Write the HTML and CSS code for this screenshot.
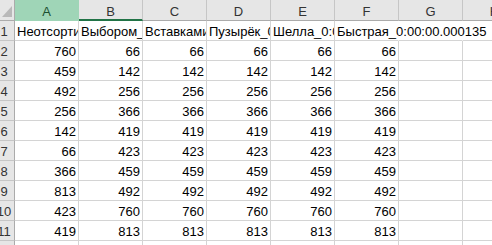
FILE: index.html
```html
<!DOCTYPE html>
<html lang="ru">
  <head>
    <meta charset="UTF-8" />
    <title>Сортировки</title>
    <link rel="stylesheet" href="styles.css">
  </head>
  <body>
    <div class="sheet">
      <!-- заголовки столбцов -->
      <div class="corner"><span class="tri"></span></div>
      <div class="col col-sel">A</div>
      <div class="col col-line">B</div>
      <div class="col">C</div>
      <div class="col">D</div>
      <div class="col">E</div>
      <div class="col">F</div>
      <div class="col">G</div>
      <div class="col">H</div>

      <!-- 1 -->
      <div class="rh">1</div>
      <div class="cell txt">Неотсортированный</div>
      <div class="cell txt">Выбором_0:00:00.000061</div>
      <div class="cell txt">Вставками_0:00:00.000042</div>
      <div class="cell txt">Пузырёк_0:00:00.000088</div>
      <div class="cell txt">Шелла_0:00:00.000047</div>
      <div class="cell txt spill">Быстрая_0:00:00.000135</div>
      <div class="cell spill"></div>
      <div class="cell"></div>

      <!-- 2 -->
      <div class="rh">2</div>
      <div class="cell">760</div><div class="cell">66</div><div class="cell">66</div>
      <div class="cell">66</div><div class="cell">66</div><div class="cell">66</div>
      <div class="cell"></div><div class="cell"></div>

      <!-- 3 -->
      <div class="rh">3</div>
      <div class="cell">459</div><div class="cell">142</div><div class="cell">142</div>
      <div class="cell">142</div><div class="cell">142</div><div class="cell">142</div>
      <div class="cell"></div><div class="cell"></div>

      <!-- 4 -->
      <div class="rh">4</div>
      <div class="cell">492</div><div class="cell">256</div><div class="cell">256</div>
      <div class="cell">256</div><div class="cell">256</div><div class="cell">256</div>
      <div class="cell"></div><div class="cell"></div>

      <!-- 5 -->
      <div class="rh">5</div>
      <div class="cell">256</div><div class="cell">366</div><div class="cell">366</div>
      <div class="cell">366</div><div class="cell">366</div><div class="cell">366</div>
      <div class="cell"></div><div class="cell"></div>

      <!-- 6 -->
      <div class="rh">6</div>
      <div class="cell">142</div><div class="cell">419</div><div class="cell">419</div>
      <div class="cell">419</div><div class="cell">419</div><div class="cell">419</div>
      <div class="cell"></div><div class="cell"></div>

      <!-- 7 -->
      <div class="rh">7</div>
      <div class="cell">66</div><div class="cell">423</div><div class="cell">423</div>
      <div class="cell">423</div><div class="cell">423</div><div class="cell">423</div>
      <div class="cell"></div><div class="cell"></div>

      <!-- 8 -->
      <div class="rh">8</div>
      <div class="cell">366</div><div class="cell">459</div><div class="cell">459</div>
      <div class="cell">459</div><div class="cell">459</div><div class="cell">459</div>
      <div class="cell"></div><div class="cell"></div>

      <!-- 9 -->
      <div class="rh">9</div>
      <div class="cell">813</div><div class="cell">492</div><div class="cell">492</div>
      <div class="cell">492</div><div class="cell">492</div><div class="cell">492</div>
      <div class="cell"></div><div class="cell"></div>

      <!-- 10 -->
      <div class="rh">10</div>
      <div class="cell">423</div><div class="cell">760</div><div class="cell">760</div>
      <div class="cell">760</div><div class="cell">760</div><div class="cell">760</div>
      <div class="cell"></div><div class="cell"></div>

      <!-- 11 -->
      <div class="rh">11</div>
      <div class="cell">419</div><div class="cell">813</div><div class="cell">813</div>
      <div class="cell">813</div><div class="cell">813</div><div class="cell">813</div>
      <div class="cell"></div><div class="cell"></div>

      <!-- 12 -->
      <div class="rh">12</div>
      <div class="cell"></div><div class="cell"></div><div class="cell"></div>
      <div class="cell"></div><div class="cell"></div><div class="cell"></div>
      <div class="cell"></div><div class="cell"></div>
    </div>
  </body>
</html>
```

FILE: styles.css
```css
body {
  margin: 0;
  overflow: hidden;
  background: #fff;
  font-family: "Liberation Sans", Arial, sans-serif;
  font-size: 13px;
  color: #000;
}

.sheet {
  display: grid;
  grid-template-columns: 21px repeat(8, 64px);
  grid-template-rows: 21px repeat(12, 20px);
  margin-left: -6px;
  width: max-content;
}

.sheet > div {
  box-sizing: border-box;
  white-space: nowrap;
}

/* угол "выделить всё" */
.corner {
  display: flex;
  justify-content: flex-end;
  align-items: flex-end;
  padding: 0 2px 3px 0;
  background: #e6e6e6;
  border-right: 1px solid #ababab;
  border-bottom: 1px solid #ababab;
}
.tri {
  width: 10px;
  height: 11px;
  background: #b9b9b9;
  clip-path: polygon(100% 0, 100% 100%, 0 100%);
}

/* заголовки столбцов */
.col {
  background: #e6e6e6;
  color: #333;
  text-align: center;
  padding-top: 3px;
  line-height: 17px;
  border-right: 1px solid #c6c6c6;
  border-bottom: 1px solid #ababab;
}
.col-sel {
  background: #9fd5b7;
  color: #1c4f31;
  border-right-color: #9fd5b7;
  border-bottom-color: #9fd5b7;
}
.col-line {
  border-bottom: 2px solid #217346;
}

/* номера строк */
.rh {
  background: #e6e6e6;
  color: #333;
  text-align: center;
  padding-top: 2px;
  line-height: 17px;
  border-right: 1px solid #ababab;
  border-bottom: 1px solid #c6c6c6;
}

/* ячейки */
.cell {
  padding: 2px 2px 0;
  line-height: 17px;
  text-align: right;
  overflow: hidden;
  border-right: 1px solid #d4d4d4;
  border-bottom: 1px solid #d4d4d4;
}
.txt {
  text-align: left;
}
.spill {
  overflow: visible;
  border-right-color: transparent;
}
```
